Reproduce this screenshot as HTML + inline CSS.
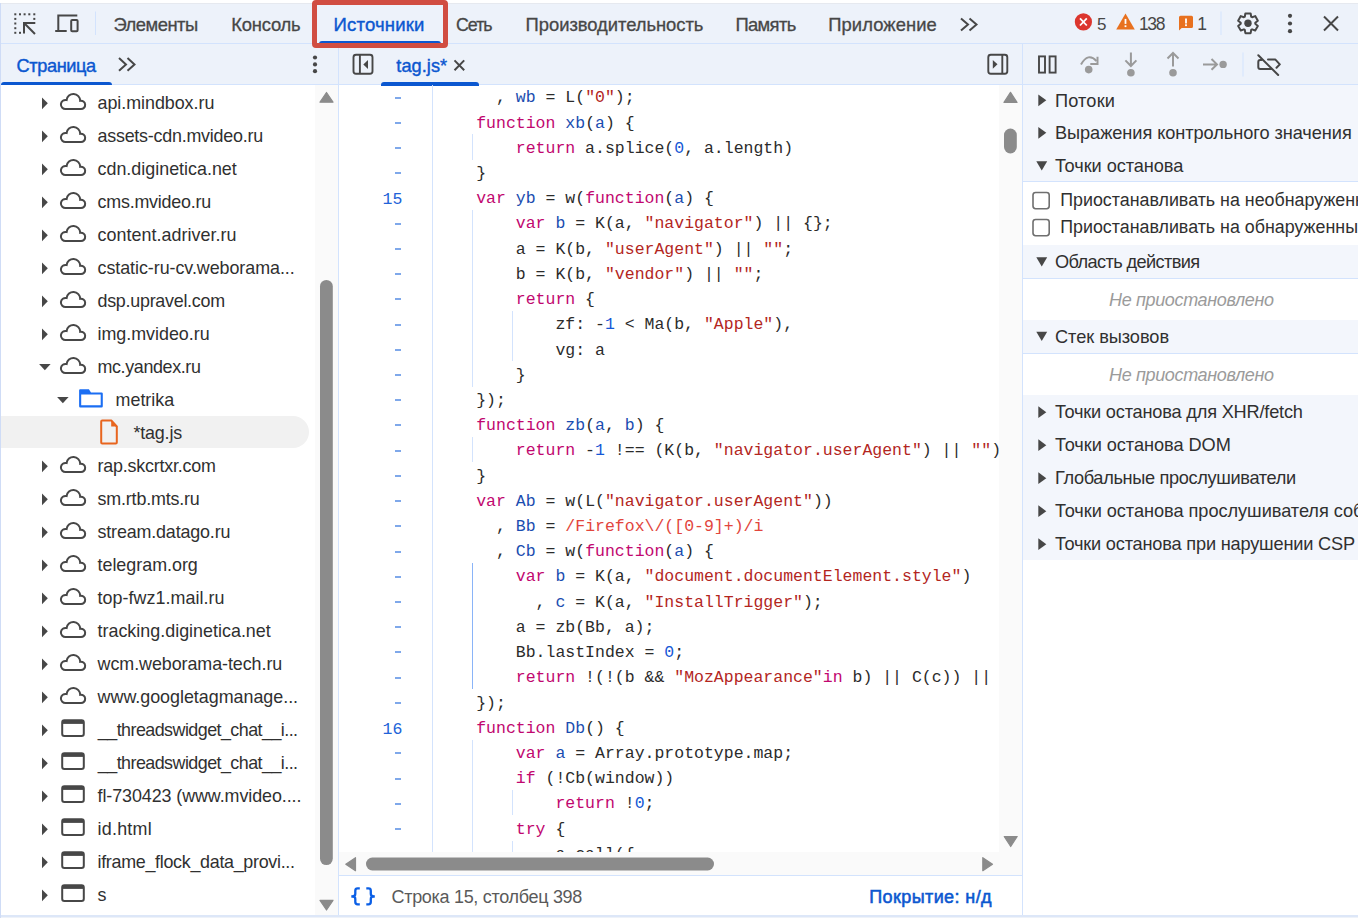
<!DOCTYPE html>
<html><head><meta charset="utf-8"><title>DevTools</title>
<style>
html,body{margin:0;padding:0;width:1358px;height:918px;overflow:hidden;background:#fff}
.r{position:absolute;box-sizing:content-box}
.t{position:absolute;white-space:pre;font-family:"Liberation Sans",sans-serif}
svg.r{overflow:visible}
</style></head><body>
<div class="r" style="left:0px;top:0px;width:1358px;height:918px;background:#ffffff;"></div>
<div class="r" style="left:0px;top:3px;width:1358px;height:1px;background:#e6e9ef;"></div>
<div class="r" style="left:0px;top:4px;width:1358px;height:39px;background:#edf2fa;"></div>
<div class="r" style="left:0px;top:43px;width:1358px;height:1px;background:#d3e3fd;"></div>
<div class="r" style="left:0px;top:44px;width:1358px;height:40px;background:#edf2fa;"></div>
<div class="r" style="left:0px;top:84px;width:1358px;height:1px;background:#d3e3fd;"></div>
<div class="r" style="left:1023px;top:85px;width:335px;height:96px;background:#f3f6fc;"></div>
<div class="r" style="left:1023px;top:181px;width:335px;height:1px;background:#d3e3fd;"></div>
<div class="r" style="left:1023px;top:245px;width:335px;height:33px;background:#f3f6fc;"></div>
<div class="r" style="left:1023px;top:278px;width:335px;height:1px;background:#d3e3fd;"></div>
<div class="r" style="left:1023px;top:320px;width:335px;height:33px;background:#f3f6fc;"></div>
<div class="r" style="left:1023px;top:353px;width:335px;height:1px;background:#d3e3fd;"></div>
<div class="r" style="left:1023px;top:395px;width:335px;height:165px;background:#f3f6fc;"></div>
<div class="r" style="left:338px;top:44px;width:1px;height:872px;background:#d3e3fd;"></div>
<div class="r" style="left:1022px;top:44px;width:1px;height:872px;background:#d3e3fd;"></div>
<div class="r" style="left:0px;top:915px;width:1358px;height:2px;background:#dde7f8;"></div>
<div class="r" style="left:0px;top:917px;width:1358px;height:1px;background:#eef2f9;"></div>
<div class="r" style="left:0px;top:3px;width:1px;height:915px;background:#cfdcf6;"></div>
<svg class="r" style="left:0;top:0" width="1358" height="44" viewBox="0 0 1358 44">
<g fill="#474747">
<rect x="14.3" y="13.3" width="2" height="2"/><rect x="19" y="13.3" width="2" height="2"/><rect x="23.6" y="13.3" width="2" height="2"/><rect x="28.3" y="13.3" width="2" height="2"/><rect x="33.3" y="13.3" width="2" height="2"/>
<rect x="14.3" y="17.9" width="2" height="2"/><rect x="14.3" y="22.5" width="2" height="2"/><rect x="14.3" y="27.2" width="2" height="2"/><rect x="14.3" y="31.8" width="2" height="2"/>
<rect x="19" y="31.8" width="2" height="2"/><rect x="33.3" y="17.9" width="2" height="2"/>
</g>
<g stroke="#474747" stroke-width="2" fill="none">
<path d="M24 33.6V23H35.3"/><path d="M24.3 23.3L35 34"/>
<path d="M77.3 15.5H58.3V31"/><path d="M55.2 31H66.7"/>
<rect x="71.2" y="20" width="6.4" height="11.2" rx="1"/>
<path d="M961 18.4L968 24.4L961 30.4M969.5 18.4L976.5 24.4L969.5 30.4"/>
<path d="M1324 16.5L1338 30.5M1338 16.5L1324 30.5"/>
</g>
<rect x="95" y="11.5" width="1" height="23.5" fill="#d3e3fd"/>
<rect x="1220.5" y="11.5" width="1" height="23.5" fill="#d3e3fd"/>
<circle cx="1083.4" cy="21.9" r="8.6" fill="#dc362e"/>
<path d="M1080 18.3L1086.8 25.5M1086.8 18.3L1080 25.5" stroke="#fff" stroke-width="1.8"/>
<path d="M1125.5 13.5L1134.8 29.5H1116.2Z" fill="#e8711f"/>
<rect x="1124.6" y="18.9" width="1.8" height="5" fill="#fff"/><rect x="1124.6" y="25.3" width="1.8" height="1.8" fill="#fff"/>
<path d="M1180.5 15.8H1191.5Q1193 15.8 1193 17.3V26.6Q1193 28.1 1191.5 28.1H1181.7L1179 30.6V17.3Q1179 15.8 1180.5 15.8Z" fill="#e8711f"/>
<rect x="1185.1" y="18.5" width="1.8" height="5" fill="#fff"/><rect x="1185.1" y="24.3" width="1.8" height="1.8" fill="#fff"/>
<circle cx="1290" cy="15.8" r="2.1" fill="#474747"/><circle cx="1290" cy="23.5" r="2.1" fill="#474747"/><circle cx="1290" cy="31.2" r="2.1" fill="#474747"/>
<path d="M1244.80 16.74L1245.36 13.45L1250.64 13.45L1251.20 16.74L1252.08 17.25L1255.21 16.09L1257.85 20.66L1255.28 22.79L1255.28 23.81L1257.85 25.94L1255.21 30.51L1252.08 29.35L1251.20 29.86L1250.64 33.15L1245.36 33.15L1244.80 29.86L1243.92 29.35L1240.79 30.51L1238.15 25.94L1240.72 23.81L1240.72 22.79L1238.15 20.66L1240.79 16.09L1243.92 17.25Z" fill="none" stroke="#474747" stroke-width="2" stroke-linejoin="round"/><circle cx="1248" cy="23.3" r="3.7" fill="#474747"/>
</svg>
<div class="t" style="left:113.50px;top:10.30px;font-size:18.400px;line-height:30px;color:#474747;font-weight:normal;font-style:normal;font-family:'Liberation Sans', sans-serif;letter-spacing:-0.503px;-webkit-text-stroke:0.3px #474747">Элементы</div>
<div class="t" style="left:231.30px;top:10.30px;font-size:18.400px;line-height:30px;color:#474747;font-weight:normal;font-style:normal;font-family:'Liberation Sans', sans-serif;letter-spacing:-0.209px;-webkit-text-stroke:0.3px #474747">Консоль</div>
<div class="t" style="left:456.00px;top:10.30px;font-size:17.800px;line-height:30px;color:#474747;font-weight:normal;font-style:normal;font-family:'Liberation Sans', sans-serif;letter-spacing:-1.002px;-webkit-text-stroke:0.3px #474747">Сеть</div>
<div class="t" style="left:525.60px;top:10.30px;font-size:18.400px;line-height:30px;color:#474747;font-weight:normal;font-style:normal;font-family:'Liberation Sans', sans-serif;letter-spacing:-0.040px;-webkit-text-stroke:0.3px #474747">Производительность</div>
<div class="t" style="left:735.50px;top:10.30px;font-size:18.400px;line-height:30px;color:#474747;font-weight:normal;font-style:normal;font-family:'Liberation Sans', sans-serif;letter-spacing:-0.665px;-webkit-text-stroke:0.3px #474747">Память</div>
<div class="t" style="left:828.20px;top:10.30px;font-size:18.400px;line-height:30px;color:#474747;font-weight:normal;font-style:normal;font-family:'Liberation Sans', sans-serif;letter-spacing:0.087px;-webkit-text-stroke:0.3px #474747">Приложение</div>
<div class="t" style="left:333.60px;top:10.30px;font-size:18.500px;line-height:30px;color:#0b57d0;font-weight:normal;font-style:normal;font-family:'Liberation Sans', sans-serif;letter-spacing:0.168px;-webkit-text-stroke:0.4px #0b57d0">Источники</div>
<div class="t" style="left:1097.00px;top:9.80px;font-size:17.000px;line-height:30px;color:#474747;font-weight:normal;font-style:normal;font-family:'Liberation Sans', sans-serif;letter-spacing:0.000px;">5</div>
<div class="t" style="left:1139.00px;top:8.80px;font-size:17.500px;line-height:30px;color:#474747;font-weight:normal;font-style:normal;font-family:'Liberation Sans', sans-serif;letter-spacing:-1.362px;">138</div>
<div class="t" style="left:1197.30px;top:8.80px;font-size:17.500px;line-height:30px;color:#474747;font-weight:normal;font-style:normal;font-family:'Liberation Sans', sans-serif;letter-spacing:0.000px;">1</div>
<div class="r" style="left:319px;top:41px;width:122px;height:3px;background:#0b57d0;border-radius:3px 3px 0 0"></div>
<div class="r" style="left:312px;top:0px;width:126px;height:38px;border:5px solid #d14d41;border-radius:4px"></div>
<div class="t" style="left:16.50px;top:51.40px;font-size:18.200px;line-height:30px;color:#0b57d0;font-weight:normal;font-style:normal;font-family:'Liberation Sans', sans-serif;letter-spacing:-0.391px;-webkit-text-stroke:0.4px #0b57d0">Страница</div>
<div class="r" style="left:1px;top:82px;width:111px;height:3px;background:#0b57d0;border-radius:3px 3px 0 0"></div>
<div class="t" style="left:396.30px;top:51.20px;font-size:18.200px;line-height:30px;color:#0b57d0;font-weight:normal;font-style:normal;font-family:'Liberation Sans', sans-serif;letter-spacing:0.051px;-webkit-text-stroke:0.4px #0b57d0">tag.js*</div>
<div class="r" style="left:381px;top:82.3px;width:98px;height:3.3px;background:#0b57d0;border-radius:3px 3px 0 0"></div>
<div class="r" style="left:427px;top:84px;width:49px;height:2px;background:#0b57d0"></div>
<svg class="r" style="left:0;top:44" width="1358" height="41" viewBox="0 44 1358 41">
<g stroke="#474747" stroke-width="2" fill="none">
<path d="M119 58L126 64.4L119 70.8M127.5 58L134.5 64.4L127.5 70.8"/>
<path d="M454.5 60.4L464.2 70.2M464.2 60.4L454.5 70.2"/>
</g>
<circle cx="315" cy="57.5" r="2.1" fill="#474747"/><circle cx="315" cy="64.4" r="2.1" fill="#474747"/><circle cx="315" cy="71.2" r="2.1" fill="#474747"/>
<g stroke="#474747" stroke-width="1.9" fill="none">
<rect x="353.5" y="54.7" width="19" height="19" rx="2.5"/>
<path d="M359.9 54.7V73.7"/>
<rect x="988.3" y="54.8" width="19" height="19" rx="2.5"/>
<path d="M1002.3 54.8V73.8"/>
<rect x="1039" y="56.4" width="6" height="16.2"/>
<rect x="1049.6" y="56.4" width="6" height="16.2"/>
</g>
<path d="M363.3 64.4L368 60V68.9Z" fill="#474747"/>
<path d="M997.5 64.3L992.8 59.9V68.8Z" fill="#474747"/>
<g stroke="#9a9a9a" stroke-width="2" fill="none">
<path d="M1081 64.5Q1088 52 1096.5 61"/><path d="M1097.5 56.8V64H1090.3"/>
<path d="M1130.9 52.4V66M1125.4 60.4L1130.9 66L1136.4 60.4"/>
<path d="M1173 66.5V53M1167.5 58.5L1173 53L1178.5 58.5"/>
<path d="M1203 64.4H1216.5M1211.5 59L1217 64.4L1211.5 69.8"/>
</g>
<g fill="#9a9a9a">
<circle cx="1088.7" cy="69.6" r="3.8"/><circle cx="1130.9" cy="72.7" r="3.8"/><circle cx="1173" cy="72.7" r="3.8"/><circle cx="1223.1" cy="64.4" r="3.7"/>
</g>
<rect x="1242.5" y="52.5" width="1" height="24" fill="#d3e3fd"/>
<g stroke="#474747" stroke-width="2" fill="none" stroke-linecap="round" stroke-linejoin="round">
<path d="M1258.3 55.2L1278.2 75"/>
<path d="M1261.5 60H1260.2Q1258.3 60 1258.3 62V67Q1258.3 69 1260.2 69H1271.2"/>
<path d="M1268 59.4H1275.2L1279.8 64.4L1276.5 67.8"/>
</g>
</svg>
<div class="r" style="left:1px;top:416px;width:308px;height:32px;background:#f1f1f1;border-radius:0 16px 16px 0"></div>
<div class="t" style="left:97.50px;top:88.00px;font-size:17.900px;line-height:30px;color:#303030;font-weight:normal;font-style:normal;font-family:'Liberation Sans', sans-serif;letter-spacing:-0.040px;">api.mindbox.ru</div>
<div class="t" style="left:97.50px;top:121.00px;font-size:17.900px;line-height:30px;color:#303030;font-weight:normal;font-style:normal;font-family:'Liberation Sans', sans-serif;letter-spacing:-0.234px;">assets-cdn.mvideo.ru</div>
<div class="t" style="left:97.50px;top:154.00px;font-size:17.900px;line-height:30px;color:#303030;font-weight:normal;font-style:normal;font-family:'Liberation Sans', sans-serif;letter-spacing:0.003px;">cdn.diginetica.net</div>
<div class="t" style="left:97.50px;top:187.00px;font-size:17.900px;line-height:30px;color:#303030;font-weight:normal;font-style:normal;font-family:'Liberation Sans', sans-serif;letter-spacing:-0.212px;">cms.mvideo.ru</div>
<div class="t" style="left:97.50px;top:220.00px;font-size:17.900px;line-height:30px;color:#303030;font-weight:normal;font-style:normal;font-family:'Liberation Sans', sans-serif;letter-spacing:0.037px;">content.adriver.ru</div>
<div class="t" style="left:97.50px;top:253.00px;font-size:17.900px;line-height:30px;color:#303030;font-weight:normal;font-style:normal;font-family:'Liberation Sans', sans-serif;letter-spacing:-0.054px;">cstatic-ru-cv.weborama...</div>
<div class="t" style="left:97.50px;top:286.00px;font-size:17.900px;line-height:30px;color:#303030;font-weight:normal;font-style:normal;font-family:'Liberation Sans', sans-serif;letter-spacing:-0.264px;">dsp.upravel.com</div>
<div class="t" style="left:97.50px;top:319.00px;font-size:17.900px;line-height:30px;color:#303030;font-weight:normal;font-style:normal;font-family:'Liberation Sans', sans-serif;letter-spacing:-0.018px;">img.mvideo.ru</div>
<div class="t" style="left:97.50px;top:352.00px;font-size:17.900px;line-height:30px;color:#303030;font-weight:normal;font-style:normal;font-family:'Liberation Sans', sans-serif;letter-spacing:-0.363px;">mc.yandex.ru</div>
<div class="t" style="left:115.50px;top:385.00px;font-size:17.900px;line-height:30px;color:#303030;font-weight:normal;font-style:normal;font-family:'Liberation Sans', sans-serif;letter-spacing:0.015px;">metrika</div>
<div class="t" style="left:133.50px;top:418.00px;font-size:17.900px;line-height:30px;color:#303030;font-weight:normal;font-style:normal;font-family:'Liberation Sans', sans-serif;letter-spacing:-0.177px;">*tag.js</div>
<div class="t" style="left:97.50px;top:451.00px;font-size:17.900px;line-height:30px;color:#303030;font-weight:normal;font-style:normal;font-family:'Liberation Sans', sans-serif;letter-spacing:-0.204px;">rap.skcrtxr.com</div>
<div class="t" style="left:97.50px;top:484.00px;font-size:17.900px;line-height:30px;color:#303030;font-weight:normal;font-style:normal;font-family:'Liberation Sans', sans-serif;letter-spacing:-0.171px;">sm.rtb.mts.ru</div>
<div class="t" style="left:97.50px;top:517.00px;font-size:17.900px;line-height:30px;color:#303030;font-weight:normal;font-style:normal;font-family:'Liberation Sans', sans-serif;letter-spacing:-0.155px;">stream.datago.ru</div>
<div class="t" style="left:97.50px;top:550.00px;font-size:17.900px;line-height:30px;color:#303030;font-weight:normal;font-style:normal;font-family:'Liberation Sans', sans-serif;letter-spacing:-0.010px;">telegram.org</div>
<div class="t" style="left:97.50px;top:583.00px;font-size:17.900px;line-height:30px;color:#303030;font-weight:normal;font-style:normal;font-family:'Liberation Sans', sans-serif;letter-spacing:0.048px;">top-fwz1.mail.ru</div>
<div class="t" style="left:97.50px;top:616.00px;font-size:17.900px;line-height:30px;color:#303030;font-weight:normal;font-style:normal;font-family:'Liberation Sans', sans-serif;letter-spacing:0.010px;">tracking.diginetica.net</div>
<div class="t" style="left:97.59px;top:649.00px;font-size:17.900px;line-height:30px;color:#303030;font-weight:normal;font-style:normal;font-family:'Liberation Sans', sans-serif;letter-spacing:-0.067px;">wcm.weborama-tech.ru</div>
<div class="t" style="left:97.59px;top:682.00px;font-size:17.900px;line-height:30px;color:#303030;font-weight:normal;font-style:normal;font-family:'Liberation Sans', sans-serif;letter-spacing:-0.019px;">www.googletagmanage...</div>
<div class="t" style="left:97.86px;top:715.00px;font-size:17.900px;line-height:30px;color:#303030;font-weight:normal;font-style:normal;font-family:'Liberation Sans', sans-serif;letter-spacing:-0.546px;">__threadswidget_chat__i...</div>
<div class="t" style="left:97.86px;top:748.00px;font-size:17.900px;line-height:30px;color:#303030;font-weight:normal;font-style:normal;font-family:'Liberation Sans', sans-serif;letter-spacing:-0.546px;">__threadswidget_chat__i...</div>
<div class="t" style="left:97.50px;top:781.00px;font-size:17.900px;line-height:30px;color:#303030;font-weight:normal;font-style:normal;font-family:'Liberation Sans', sans-serif;letter-spacing:-0.077px;">fl-730423 (www.mvideo....</div>
<div class="t" style="left:97.50px;top:814.00px;font-size:17.900px;line-height:30px;color:#303030;font-weight:normal;font-style:normal;font-family:'Liberation Sans', sans-serif;letter-spacing:0.247px;">id.html</div>
<div class="t" style="left:97.50px;top:847.00px;font-size:17.900px;line-height:30px;color:#303030;font-weight:normal;font-style:normal;font-family:'Liberation Sans', sans-serif;letter-spacing:-0.294px;">iframe_flock_data_provi...</div>
<div class="t" style="left:97.50px;top:880.00px;font-size:17.900px;line-height:30px;color:#303030;font-weight:normal;font-style:normal;font-family:'Liberation Sans', sans-serif;letter-spacing:0.000px;">s</div>
<svg class="r" style="left:0;top:0" width="338" height="918" viewBox="0 0 338 918"><path d="M42 97.5L47.8 103.3L42 109.2Z" fill="#474747"/><path d="M80.95 109.1H65.9A4.6 4.6 0 1 1 66.6 100.05A6.82 6.82 0 0 1 80.2 100.77A4.2 4.2 0 1 1 80.95 109.1Z" fill="none" stroke="#474747" stroke-width="2"/><path d="M42 130.5L47.8 136.3L42 142.2Z" fill="#474747"/><path d="M80.95 142.1H65.9A4.6 4.6 0 1 1 66.6 133.05A6.82 6.82 0 0 1 80.2 133.76999999999998A4.2 4.2 0 1 1 80.95 142.1Z" fill="none" stroke="#474747" stroke-width="2"/><path d="M42 163.5L47.8 169.3L42 175.2Z" fill="#474747"/><path d="M80.95 175.1H65.9A4.6 4.6 0 1 1 66.6 166.05A6.82 6.82 0 0 1 80.2 166.76999999999998A4.2 4.2 0 1 1 80.95 175.1Z" fill="none" stroke="#474747" stroke-width="2"/><path d="M42 196.5L47.8 202.3L42 208.2Z" fill="#474747"/><path d="M80.95 208.1H65.9A4.6 4.6 0 1 1 66.6 199.05A6.82 6.82 0 0 1 80.2 199.76999999999998A4.2 4.2 0 1 1 80.95 208.1Z" fill="none" stroke="#474747" stroke-width="2"/><path d="M42 229.5L47.8 235.3L42 241.2Z" fill="#474747"/><path d="M80.95 241.1H65.9A4.6 4.6 0 1 1 66.6 232.05A6.82 6.82 0 0 1 80.2 232.76999999999998A4.2 4.2 0 1 1 80.95 241.1Z" fill="none" stroke="#474747" stroke-width="2"/><path d="M42 262.5L47.8 268.3L42 274.2Z" fill="#474747"/><path d="M80.95 274.1H65.9A4.6 4.6 0 1 1 66.6 265.05A6.82 6.82 0 0 1 80.2 265.77A4.2 4.2 0 1 1 80.95 274.1Z" fill="none" stroke="#474747" stroke-width="2"/><path d="M42 295.5L47.8 301.3L42 307.2Z" fill="#474747"/><path d="M80.95 307.1H65.9A4.6 4.6 0 1 1 66.6 298.05A6.82 6.82 0 0 1 80.2 298.77A4.2 4.2 0 1 1 80.95 307.1Z" fill="none" stroke="#474747" stroke-width="2"/><path d="M42 328.5L47.8 334.3L42 340.2Z" fill="#474747"/><path d="M80.95 340.1H65.9A4.6 4.6 0 1 1 66.6 331.05A6.82 6.82 0 0 1 80.2 331.77A4.2 4.2 0 1 1 80.95 340.1Z" fill="none" stroke="#474747" stroke-width="2"/><path d="M39.1 363.9H50.6L44.85 370.2Z" fill="#474747"/><path d="M80.95 373.1H65.9A4.6 4.6 0 1 1 66.6 364.05A6.82 6.82 0 0 1 80.2 364.77A4.2 4.2 0 1 1 80.95 373.1Z" fill="none" stroke="#474747" stroke-width="2"/><path d="M57.1 396.9H68.6L62.85 403.2Z" fill="#474747"/><path fill-rule="evenodd" fill="#1b6ef3" d="M80.1 389.2H88.9L91 392.4H101.6Q102.8 392.4 102.8 393.6V406.2Q102.8 407.4 101.6 407.4H80.3Q79.1 407.4 79.1 406.2V390.2Q79.1 389.2 80.1 389.2ZM81.2 394.5H100.7V405.3H81.2Z"/><path d="M102.2 420.6Q101.2 420.6 101.2 421.6V442.6Q101.2 443.6 102.2 443.6H115.8Q116.8 443.6 116.8 442.6V426.5L111.5 420.6Z" fill="none" stroke="#e8651e" stroke-width="2" stroke-linejoin="round"/><path d="M111.2 420V426.5H117.5Z" fill="#e8651e"/><path d="M42 460.5L47.8 466.3L42 472.2Z" fill="#474747"/><path d="M80.95 472.1H65.9A4.6 4.6 0 1 1 66.6 463.05A6.82 6.82 0 0 1 80.2 463.77A4.2 4.2 0 1 1 80.95 472.1Z" fill="none" stroke="#474747" stroke-width="2"/><path d="M42 493.5L47.8 499.3L42 505.2Z" fill="#474747"/><path d="M80.95 505.1H65.9A4.6 4.6 0 1 1 66.6 496.05A6.82 6.82 0 0 1 80.2 496.77A4.2 4.2 0 1 1 80.95 505.1Z" fill="none" stroke="#474747" stroke-width="2"/><path d="M42 526.5L47.8 532.3L42 538.2Z" fill="#474747"/><path d="M80.95 538.1H65.9A4.6 4.6 0 1 1 66.6 529.05A6.82 6.82 0 0 1 80.2 529.77A4.2 4.2 0 1 1 80.95 538.1Z" fill="none" stroke="#474747" stroke-width="2"/><path d="M42 559.5L47.8 565.3L42 571.2Z" fill="#474747"/><path d="M80.95 571.1H65.9A4.6 4.6 0 1 1 66.6 562.05A6.82 6.82 0 0 1 80.2 562.77A4.2 4.2 0 1 1 80.95 571.1Z" fill="none" stroke="#474747" stroke-width="2"/><path d="M42 592.5L47.8 598.3L42 604.2Z" fill="#474747"/><path d="M80.95 604.1H65.9A4.6 4.6 0 1 1 66.6 595.05A6.82 6.82 0 0 1 80.2 595.77A4.2 4.2 0 1 1 80.95 604.1Z" fill="none" stroke="#474747" stroke-width="2"/><path d="M42 625.5L47.8 631.3L42 637.2Z" fill="#474747"/><path d="M80.95 637.1H65.9A4.6 4.6 0 1 1 66.6 628.05A6.82 6.82 0 0 1 80.2 628.77A4.2 4.2 0 1 1 80.95 637.1Z" fill="none" stroke="#474747" stroke-width="2"/><path d="M42 658.5L47.8 664.3L42 670.2Z" fill="#474747"/><path d="M80.95 670.1H65.9A4.6 4.6 0 1 1 66.6 661.05A6.82 6.82 0 0 1 80.2 661.77A4.2 4.2 0 1 1 80.95 670.1Z" fill="none" stroke="#474747" stroke-width="2"/><path d="M42 691.5L47.8 697.3L42 703.2Z" fill="#474747"/><path d="M80.95 703.1H65.9A4.6 4.6 0 1 1 66.6 694.05A6.82 6.82 0 0 1 80.2 694.77A4.2 4.2 0 1 1 80.95 703.1Z" fill="none" stroke="#474747" stroke-width="2"/><path d="M42 724.5L47.8 730.3L42 736.2Z" fill="#474747"/><rect x="62.2" y="720.3" width="21.6" height="15.7" rx="2.2" fill="none" stroke="#474747" stroke-width="2"/><rect x="62" y="720.3" width="22" height="3.6" fill="#474747"/><path d="M42 757.5L47.8 763.3L42 769.2Z" fill="#474747"/><rect x="62.2" y="753.3" width="21.6" height="15.7" rx="2.2" fill="none" stroke="#474747" stroke-width="2"/><rect x="62" y="753.3" width="22" height="3.6" fill="#474747"/><path d="M42 790.5L47.8 796.3L42 802.2Z" fill="#474747"/><rect x="62.2" y="786.3" width="21.6" height="15.7" rx="2.2" fill="none" stroke="#474747" stroke-width="2"/><rect x="62" y="786.3" width="22" height="3.6" fill="#474747"/><path d="M42 823.5L47.8 829.3L42 835.2Z" fill="#474747"/><rect x="62.2" y="819.3" width="21.6" height="15.7" rx="2.2" fill="none" stroke="#474747" stroke-width="2"/><rect x="62" y="819.3" width="22" height="3.6" fill="#474747"/><path d="M42 856.5L47.8 862.3L42 868.2Z" fill="#474747"/><rect x="62.2" y="852.3" width="21.6" height="15.7" rx="2.2" fill="none" stroke="#474747" stroke-width="2"/><rect x="62" y="852.3" width="22" height="3.6" fill="#474747"/><path d="M42 889.5L47.8 895.3L42 901.2Z" fill="#474747"/><rect x="62.2" y="885.3" width="21.6" height="15.7" rx="2.2" fill="none" stroke="#474747" stroke-width="2"/><rect x="62" y="885.3" width="22" height="3.6" fill="#474747"/></svg>
<div class="r" style="left:315px;top:85px;width:23px;height:830px;background:#fafafa;"></div>
<svg class="r" style="left:310px;top:85px" width="28" height="830" viewBox="310 85 28 830">
<path d="M326.5 92.5L333 102.2H320Z" fill="#8b8b8b" stroke="#8b8b8b" stroke-width="1.2" stroke-linejoin="round"/>
<rect x="320" y="280" width="12.8" height="585" rx="6.4" fill="#8b8b8b"/>
<path d="M326.5 910L333 900.3H320Z" fill="#8b8b8b" stroke="#8b8b8b" stroke-width="1.2" stroke-linejoin="round"/>
</svg>
<div class="r" style="left:339px;top:85px;width:660px;height:767px;overflow:hidden"><div class="r" style="left:93px;top:0px;width:1px;height:767px;background:#d3e3fd;"></div><div class="r" style="left:133.0px;top:49.44px;width:1px;height:25.22px;background:#d3e3fd"></div><div class="r" style="left:133.0px;top:125.10px;width:1px;height:176.54px;background:#d3e3fd"></div><div class="r" style="left:172.5px;top:225.98px;width:1px;height:50.44px;background:#d3e3fd"></div><div class="r" style="left:133.0px;top:352.08px;width:1px;height:25.22px;background:#d3e3fd"></div><div class="r" style="left:133.0px;top:478.18px;width:1px;height:126.10px;background:#8ab4f8"></div><div class="r" style="left:133.0px;top:654.72px;width:1px;height:378.30px;background:#d3e3fd"></div><div class="r" style="left:172.5px;top:705.16px;width:1px;height:25.22px;background:#d3e3fd"></div><div class="r" style="left:172.5px;top:755.60px;width:1px;height:277.42px;background:#d3e3fd"></div><div class="t" style="left:157.00px;top:0.31px;font-family:'Liberation Mono', monospace;font-size:16.5px;line-height:25px"><span style="color:#2b2b2b">, </span><span style="color:#1a4db0">wb</span><span style="color:#2b2b2b"> = L(</span><span style="color:#b3261e">&quot;0&quot;</span><span style="color:#2b2b2b">);</span></div><div class="r" style="left:55.5px;top:12px;width:6px;height:2px;background:#7fa8ea"></div><div class="t" style="left:137.20px;top:25.53px;font-family:'Liberation Mono', monospace;font-size:16.5px;line-height:25px"><span style="color:#c1076f">function</span><span style="color:#2b2b2b"> </span><span style="color:#1a4db0">xb</span><span style="color:#2b2b2b">(</span><span style="color:#1a4db0">a</span><span style="color:#2b2b2b">) {</span></div><div class="r" style="left:55.5px;top:37px;width:6px;height:2px;background:#7fa8ea"></div><div class="t" style="left:176.80px;top:50.75px;font-family:'Liberation Mono', monospace;font-size:16.5px;line-height:25px"><span style="color:#c1076f">return</span><span style="color:#2b2b2b"> a.splice(</span><span style="color:#1558d6">0</span><span style="color:#2b2b2b">, a.length)</span></div><div class="r" style="left:55.5px;top:62px;width:6px;height:2px;background:#7fa8ea"></div><div class="t" style="left:137.20px;top:75.97px;font-family:'Liberation Mono', monospace;font-size:16.5px;line-height:25px"><span style="color:#2b2b2b">}</span></div><div class="r" style="left:55.5px;top:87px;width:6px;height:2px;background:#7fa8ea"></div><div class="t" style="left:137.20px;top:101.19px;font-family:'Liberation Mono', monospace;font-size:16.5px;line-height:25px"><span style="color:#c1076f">var</span><span style="color:#2b2b2b"> </span><span style="color:#1a4db0">yb</span><span style="color:#2b2b2b"> = w(</span><span style="color:#c1076f">function</span><span style="color:#2b2b2b">(</span><span style="color:#1a4db0">a</span><span style="color:#2b2b2b">) {</span></div><div class="t" style="left:43.50px;top:99.98px;font-size:16.500px;line-height:30px;color:#2162d8;font-weight:normal;font-style:normal;font-family:'Liberation Mono', monospace;letter-spacing:0.000px;">15</div><div class="t" style="left:176.80px;top:126.41px;font-family:'Liberation Mono', monospace;font-size:16.5px;line-height:25px"><span style="color:#c1076f">var</span><span style="color:#2b2b2b"> </span><span style="color:#1a4db0">b</span><span style="color:#2b2b2b"> = K(a, </span><span style="color:#b3261e">&quot;navigator&quot;</span><span style="color:#2b2b2b">) || {};</span></div><div class="r" style="left:55.5px;top:138px;width:6px;height:2px;background:#7fa8ea"></div><div class="t" style="left:176.80px;top:151.63px;font-family:'Liberation Mono', monospace;font-size:16.5px;line-height:25px"><span style="color:#2b2b2b">a = K(b, </span><span style="color:#b3261e">&quot;userAgent&quot;</span><span style="color:#2b2b2b">) || </span><span style="color:#b3261e">&quot;&quot;</span><span style="color:#2b2b2b">;</span></div><div class="r" style="left:55.5px;top:163px;width:6px;height:2px;background:#7fa8ea"></div><div class="t" style="left:176.80px;top:176.85px;font-family:'Liberation Mono', monospace;font-size:16.5px;line-height:25px"><span style="color:#2b2b2b">b = K(b, </span><span style="color:#b3261e">&quot;vendor&quot;</span><span style="color:#2b2b2b">) || </span><span style="color:#b3261e">&quot;&quot;</span><span style="color:#2b2b2b">;</span></div><div class="r" style="left:55.5px;top:188px;width:6px;height:2px;background:#7fa8ea"></div><div class="t" style="left:176.80px;top:202.07px;font-family:'Liberation Mono', monospace;font-size:16.5px;line-height:25px"><span style="color:#c1076f">return</span><span style="color:#2b2b2b"> {</span></div><div class="r" style="left:55.5px;top:213px;width:6px;height:2px;background:#7fa8ea"></div><div class="t" style="left:216.40px;top:227.29px;font-family:'Liberation Mono', monospace;font-size:16.5px;line-height:25px"><span style="color:#2b2b2b">zf: -</span><span style="color:#1558d6">1</span><span style="color:#2b2b2b"> &lt; Ma(b, </span><span style="color:#b3261e">&quot;Apple&quot;</span><span style="color:#2b2b2b">),</span></div><div class="r" style="left:55.5px;top:239px;width:6px;height:2px;background:#7fa8ea"></div><div class="t" style="left:216.40px;top:252.51px;font-family:'Liberation Mono', monospace;font-size:16.5px;line-height:25px"><span style="color:#2b2b2b">vg: a</span></div><div class="r" style="left:55.5px;top:264px;width:6px;height:2px;background:#7fa8ea"></div><div class="t" style="left:176.80px;top:277.73px;font-family:'Liberation Mono', monospace;font-size:16.5px;line-height:25px"><span style="color:#2b2b2b">}</span></div><div class="r" style="left:55.5px;top:289px;width:6px;height:2px;background:#7fa8ea"></div><div class="t" style="left:137.20px;top:302.95px;font-family:'Liberation Mono', monospace;font-size:16.5px;line-height:25px"><span style="color:#2b2b2b">});</span></div><div class="r" style="left:55.5px;top:314px;width:6px;height:2px;background:#7fa8ea"></div><div class="t" style="left:137.20px;top:328.17px;font-family:'Liberation Mono', monospace;font-size:16.5px;line-height:25px"><span style="color:#c1076f">function</span><span style="color:#2b2b2b"> </span><span style="color:#1a4db0">zb</span><span style="color:#2b2b2b">(</span><span style="color:#1a4db0">a</span><span style="color:#2b2b2b">, </span><span style="color:#1a4db0">b</span><span style="color:#2b2b2b">) {</span></div><div class="r" style="left:55.5px;top:339px;width:6px;height:2px;background:#7fa8ea"></div><div class="t" style="left:176.80px;top:353.39px;font-family:'Liberation Mono', monospace;font-size:16.5px;line-height:25px"><span style="color:#c1076f">return</span><span style="color:#2b2b2b"> -</span><span style="color:#1558d6">1</span><span style="color:#2b2b2b"> !== (K(b, </span><span style="color:#b3261e">&quot;navigator.userAgent&quot;</span><span style="color:#2b2b2b">) || </span><span style="color:#b3261e">&quot;&quot;</span><span style="color:#2b2b2b">)</span></div><div class="r" style="left:55.5px;top:365px;width:6px;height:2px;background:#7fa8ea"></div><div class="t" style="left:137.20px;top:378.61px;font-family:'Liberation Mono', monospace;font-size:16.5px;line-height:25px"><span style="color:#2b2b2b">}</span></div><div class="r" style="left:55.5px;top:390px;width:6px;height:2px;background:#7fa8ea"></div><div class="t" style="left:137.20px;top:403.83px;font-family:'Liberation Mono', monospace;font-size:16.5px;line-height:25px"><span style="color:#c1076f">var</span><span style="color:#2b2b2b"> </span><span style="color:#1a4db0">Ab</span><span style="color:#2b2b2b"> = w(L(</span><span style="color:#b3261e">&quot;navigator.userAgent&quot;</span><span style="color:#2b2b2b">))</span></div><div class="r" style="left:55.5px;top:415px;width:6px;height:2px;background:#7fa8ea"></div><div class="t" style="left:157.00px;top:429.05px;font-family:'Liberation Mono', monospace;font-size:16.5px;line-height:25px"><span style="color:#2b2b2b">, </span><span style="color:#1a4db0">Bb</span><span style="color:#2b2b2b"> = </span><span style="color:#e2453c">/Firefox\/([0-9]+)/i</span></div><div class="r" style="left:55.5px;top:440px;width:6px;height:2px;background:#7fa8ea"></div><div class="t" style="left:157.00px;top:454.27px;font-family:'Liberation Mono', monospace;font-size:16.5px;line-height:25px"><span style="color:#2b2b2b">, </span><span style="color:#1a4db0">Cb</span><span style="color:#2b2b2b"> = w(</span><span style="color:#c1076f">function</span><span style="color:#2b2b2b">(</span><span style="color:#1a4db0">a</span><span style="color:#2b2b2b">) {</span></div><div class="r" style="left:55.5px;top:466px;width:6px;height:2px;background:#7fa8ea"></div><div class="t" style="left:176.80px;top:479.49px;font-family:'Liberation Mono', monospace;font-size:16.5px;line-height:25px"><span style="color:#c1076f">var</span><span style="color:#2b2b2b"> </span><span style="color:#1a4db0">b</span><span style="color:#2b2b2b"> = K(a, </span><span style="color:#b3261e">&quot;document.documentElement.style&quot;</span><span style="color:#2b2b2b">)</span></div><div class="r" style="left:55.5px;top:491px;width:6px;height:2px;background:#7fa8ea"></div><div class="t" style="left:196.60px;top:504.71px;font-family:'Liberation Mono', monospace;font-size:16.5px;line-height:25px"><span style="color:#2b2b2b">, </span><span style="color:#1a4db0">c</span><span style="color:#2b2b2b"> = K(a, </span><span style="color:#b3261e">&quot;InstallTrigger&quot;</span><span style="color:#2b2b2b">);</span></div><div class="r" style="left:55.5px;top:516px;width:6px;height:2px;background:#7fa8ea"></div><div class="t" style="left:176.80px;top:529.93px;font-family:'Liberation Mono', monospace;font-size:16.5px;line-height:25px"><span style="color:#2b2b2b">a = zb(Bb, a);</span></div><div class="r" style="left:55.5px;top:541px;width:6px;height:2px;background:#7fa8ea"></div><div class="t" style="left:176.80px;top:555.15px;font-family:'Liberation Mono', monospace;font-size:16.5px;line-height:25px"><span style="color:#2b2b2b">Bb.lastIndex = </span><span style="color:#1558d6">0</span><span style="color:#2b2b2b">;</span></div><div class="r" style="left:55.5px;top:566px;width:6px;height:2px;background:#7fa8ea"></div><div class="t" style="left:176.80px;top:580.37px;font-family:'Liberation Mono', monospace;font-size:16.5px;line-height:25px"><span style="color:#c1076f">return</span><span style="color:#2b2b2b"> !(!(b &amp;&amp; </span><span style="color:#b3261e">&quot;MozAppearance&quot;</span><span style="color:#c1076f">in</span><span style="color:#2b2b2b"> b) || C(c)) ||</span></div><div class="r" style="left:55.5px;top:592px;width:6px;height:2px;background:#7fa8ea"></div><div class="t" style="left:137.20px;top:605.59px;font-family:'Liberation Mono', monospace;font-size:16.5px;line-height:25px"><span style="color:#2b2b2b">});</span></div><div class="r" style="left:55.5px;top:617px;width:6px;height:2px;background:#7fa8ea"></div><div class="t" style="left:137.20px;top:630.81px;font-family:'Liberation Mono', monospace;font-size:16.5px;line-height:25px"><span style="color:#c1076f">function</span><span style="color:#2b2b2b"> </span><span style="color:#1a4db0">Db</span><span style="color:#2b2b2b">() {</span></div><div class="t" style="left:43.50px;top:629.60px;font-size:16.500px;line-height:30px;color:#2162d8;font-weight:normal;font-style:normal;font-family:'Liberation Mono', monospace;letter-spacing:0.000px;">16</div><div class="t" style="left:176.80px;top:656.03px;font-family:'Liberation Mono', monospace;font-size:16.5px;line-height:25px"><span style="color:#c1076f">var</span><span style="color:#2b2b2b"> </span><span style="color:#1a4db0">a</span><span style="color:#2b2b2b"> = Array.prototype.map;</span></div><div class="r" style="left:55.5px;top:667px;width:6px;height:2px;background:#7fa8ea"></div><div class="t" style="left:176.80px;top:681.25px;font-family:'Liberation Mono', monospace;font-size:16.5px;line-height:25px"><span style="color:#c1076f">if</span><span style="color:#2b2b2b"> (!Cb(window))</span></div><div class="r" style="left:55.5px;top:693px;width:6px;height:2px;background:#7fa8ea"></div><div class="t" style="left:216.40px;top:706.47px;font-family:'Liberation Mono', monospace;font-size:16.5px;line-height:25px"><span style="color:#c1076f">return</span><span style="color:#2b2b2b"> !</span><span style="color:#1558d6">0</span><span style="color:#2b2b2b">;</span></div><div class="r" style="left:55.5px;top:718px;width:6px;height:2px;background:#7fa8ea"></div><div class="t" style="left:176.80px;top:731.69px;font-family:'Liberation Mono', monospace;font-size:16.5px;line-height:25px"><span style="color:#c1076f">try</span><span style="color:#2b2b2b"> {</span></div><div class="r" style="left:55.5px;top:743px;width:6px;height:2px;background:#7fa8ea"></div><div class="t" style="left:216.40px;top:756.91px;font-family:'Liberation Mono', monospace;font-size:16.5px;line-height:25px"><span style="color:#2b2b2b">a.call({</span></div><div class="r" style="left:55.5px;top:768px;width:6px;height:2px;background:#7fa8ea"></div></div>
<div class="r" style="left:999px;top:85px;width:23px;height:767px;background:#fafafa;"></div>
<div class="r" style="left:339px;top:852px;width:683px;height:23px;background:#fafafa;"></div>
<svg class="r" style="left:339px;top:85px" width="683" height="790" viewBox="339 85 683 790">
<path d="M1010.5 92.3L1017 102.4H1004Z" fill="#8b8b8b" stroke="#8b8b8b" stroke-width="1.2" stroke-linejoin="round"/>
<rect x="1004" y="128.6" width="12.8" height="24.8" rx="6.4" fill="#8b8b8b"/>
<path d="M1010.7 846.5L1017.2 836.5H1004.2Z" fill="#8b8b8b" stroke="#8b8b8b" stroke-width="1.2" stroke-linejoin="round"/>
<path d="M345.8 864.2L355.5 857.7V870.7Z" fill="#8b8b8b" stroke="#8b8b8b" stroke-width="1.2" stroke-linejoin="round"/>
<rect x="366" y="857.6" width="348" height="12.8" rx="6.4" fill="#8b8b8b"/>
<path d="M992.5 864.2L982.8 857.7V870.7Z" fill="#8b8b8b" stroke="#8b8b8b" stroke-width="1.2" stroke-linejoin="round"/>
</svg>
<div class="r" style="left:339px;top:875px;width:683px;height:1px;background:#d3e3fd;"></div>
<svg class="r" style="left:345px;top:880px" width="40" height="32" viewBox="345 880 40 32">
<g fill="none" stroke="#0b5fe6" stroke-width="2.3">
<path d="M359.8 888.4H357.6Q355.3 888.4 355.3 890.7V893.8Q355.3 896.4 352.5 896.4Q355.3 896.4 355.3 899V902.1Q355.3 904.4 357.6 904.4H359.8"/>
<path d="M366.3 888.4H368.5Q370.8 888.4 370.8 890.7V893.8Q370.8 896.4 373.6 896.4Q370.8 896.4 370.8 899V902.1Q370.8 904.4 368.5 904.4H366.3"/>
</g><rect x="351.3" y="895.2" width="2.6" height="2.5" fill="#0b5fe6"/><rect x="372.2" y="895.2" width="2.6" height="2.5" fill="#0b5fe6"/></svg>
<div class="t" style="left:391.50px;top:882.00px;font-size:18.000px;line-height:30px;color:#5a5a5a;font-weight:normal;font-style:normal;font-family:'Liberation Sans', sans-serif;letter-spacing:-0.304px;">Строка 15, столбец 398</div>
<div class="t" style="left:869.20px;top:882.20px;font-size:18.000px;line-height:30px;color:#0b57d0;font-weight:normal;font-style:normal;font-family:'Liberation Sans', sans-serif;letter-spacing:0.405px;-webkit-text-stroke:0.55px #0b57d0">Покрытие: н/д</div>
<div class="t" style="left:1055.00px;top:85.50px;font-size:18.200px;line-height:30px;color:#303030;font-weight:normal;font-style:normal;font-family:'Liberation Sans', sans-serif;letter-spacing:0.150px;">Потоки</div>
<div class="t" style="left:1055.00px;top:118.00px;font-size:18.200px;line-height:30px;color:#303030;font-weight:normal;font-style:normal;font-family:'Liberation Sans', sans-serif;letter-spacing:-0.065px;">Выражения контрольного значения</div>
<div class="t" style="left:1055.00px;top:151.20px;font-size:18.200px;line-height:30px;color:#303030;font-weight:normal;font-style:normal;font-family:'Liberation Sans', sans-serif;letter-spacing:-0.069px;">Точки останова</div>
<div class="t" style="left:1055.00px;top:247.20px;font-size:18.200px;line-height:30px;color:#303030;font-weight:normal;font-style:normal;font-family:'Liberation Sans', sans-serif;letter-spacing:-0.615px;">Область действия</div>
<div class="t" style="left:1055.00px;top:321.70px;font-size:18.200px;line-height:30px;color:#303030;font-weight:normal;font-style:normal;font-family:'Liberation Sans', sans-serif;letter-spacing:0.000px;letter-spacing:-0.05px">Стек вызовов</div>
<div class="t" style="left:1055.00px;top:397.40px;font-size:18.200px;line-height:30px;color:#303030;font-weight:normal;font-style:normal;font-family:'Liberation Sans', sans-serif;letter-spacing:-0.198px;">Точки останова для XHR/fetch</div>
<div class="t" style="left:1055.00px;top:430.40px;font-size:18.200px;line-height:30px;color:#303030;font-weight:normal;font-style:normal;font-family:'Liberation Sans', sans-serif;letter-spacing:0.000px;letter-spacing:-0.05px">Точки останова DOM</div>
<div class="t" style="left:1055.00px;top:463.40px;font-size:18.200px;line-height:30px;color:#303030;font-weight:normal;font-style:normal;font-family:'Liberation Sans', sans-serif;letter-spacing:-0.346px;">Глобальные прослушиватели</div>
<div class="t" style="left:1055.00px;top:496.40px;font-size:18.200px;line-height:30px;color:#303030;font-weight:normal;font-style:normal;font-family:'Liberation Sans', sans-serif;letter-spacing:0.000px;letter-spacing:-0.05px">Точки останова прослушивателя событий</div>
<div class="t" style="left:1055.00px;top:529.40px;font-size:18.200px;line-height:30px;color:#303030;font-weight:normal;font-style:normal;font-family:'Liberation Sans', sans-serif;letter-spacing:-0.197px;">Точки останова при нарушении CSP</div>
<svg class="r" style="left:1023px;top:85px" width="335" height="500" viewBox="1023 85 335 500"><path d="M1038.3 94.39999999999999L1046.3 100.3L1038.3 106.2Z" fill="#474747"/><path d="M1038.3 126.9L1046.3 132.8L1038.3 138.70000000000002Z" fill="#474747"/><path d="M1036.3 161.3H1047.2L1041.75 170.6Z" fill="#474747"/><path d="M1036.3 257.3H1047.2L1041.75 266.6Z" fill="#474747"/><path d="M1036.3 331.8H1047.2L1041.75 341.1Z" fill="#474747"/><path d="M1038.3 406.3L1046.3 412.2L1038.3 418.09999999999997Z" fill="#474747"/><path d="M1038.3 439.3L1046.3 445.2L1038.3 451.09999999999997Z" fill="#474747"/><path d="M1038.3 472.3L1046.3 478.2L1038.3 484.09999999999997Z" fill="#474747"/><path d="M1038.3 505.3L1046.3 511.2L1038.3 517.1Z" fill="#474747"/><path d="M1038.3 538.3L1046.3 544.1999999999999L1038.3 550.0999999999999Z" fill="#474747"/><rect x="1033" y="192.5" width="16.2" height="16.2" rx="2.6" fill="none" stroke="#6f6f6f" stroke-width="1.6"/><rect x="1033" y="219.5" width="16.2" height="16.2" rx="2.6" fill="none" stroke="#6f6f6f" stroke-width="1.6"/></svg>
<div class="t" style="left:1060.20px;top:185.40px;font-size:17.850px;line-height:30px;color:#303030;font-weight:normal;font-style:normal;font-family:'Liberation Sans', sans-serif;letter-spacing:0.000px;">Приостанавливать на необнаруженных исключениях</div>
<div class="t" style="left:1060.20px;top:211.90px;font-size:17.850px;line-height:30px;color:#303030;font-weight:normal;font-style:normal;font-family:'Liberation Sans', sans-serif;letter-spacing:0.000px;">Приостанавливать на обнаруженных исключениях</div>
<div class="t" style="left:1109.00px;top:284.80px;font-size:18.000px;line-height:30px;color:#9b9b9b;font-weight:normal;font-style:italic;font-family:'Liberation Sans', sans-serif;letter-spacing:-0.347px;">Не приостановлено</div>
<div class="t" style="left:1109.00px;top:359.80px;font-size:18.000px;line-height:30px;color:#9b9b9b;font-weight:normal;font-style:italic;font-family:'Liberation Sans', sans-serif;letter-spacing:-0.347px;">Не приостановлено</div>
</body></html>
